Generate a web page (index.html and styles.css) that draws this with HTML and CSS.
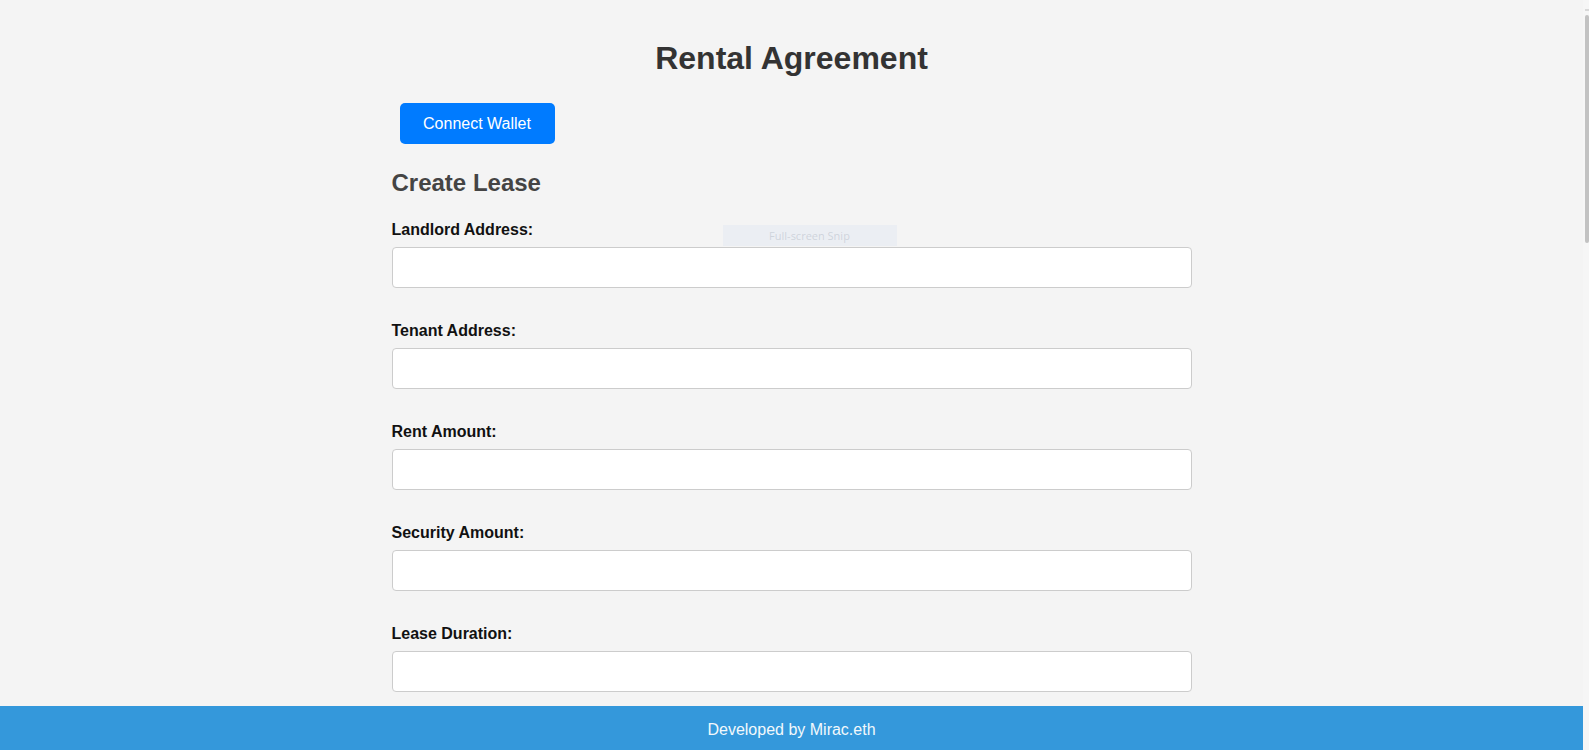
FILE: index.html
```html
<!DOCTYPE html>
<html lang="en">
<head>
<meta charset="utf-8">
<title>Rental Agreement</title>
<link rel="stylesheet" href="styles.css">
</head>
<body>
  <div class="page">
    <main class="content">
      <div class="container">
        <h1 class="title">Rental Agreement</h1>
        <div class="wallet-row">
          <button class="connect-btn" type="button">Connect Wallet</button>
        </div>
        <h2 class="section-title">Create Lease</h2>
        <form class="lease-form">
          <div class="field">
            <label class="field-label" for="landlord">Landlord Address:</label>
            <input class="field-input" id="landlord" type="text">
          </div>
          <div class="field">
            <label class="field-label" for="tenant">Tenant Address:</label>
            <input class="field-input" id="tenant" type="text">
          </div>
          <div class="field">
            <label class="field-label" for="rent">Rent Amount:</label>
            <input class="field-input" id="rent" type="text">
          </div>
          <div class="field">
            <label class="field-label" for="security">Security Amount:</label>
            <input class="field-input" id="security" type="text">
          </div>
          <div class="field">
            <label class="field-label" for="duration">Lease Duration:</label>
            <input class="field-input" id="duration" type="text">
          </div>
        </form>
        <div class="snip-ghost">Full-screen Snip</div>
      </div>
    </main>
    <footer class="footer">Developed by Mirac.eth</footer>
  </div>
  <div class="scrollbar">
    <div class="scroll-arrow"></div>
    <div class="scroll-thumb"></div>
  </div>
</body>
</html>
```

FILE: styles.css
```css
html, body {
  height: 100%;
  margin: 0;
  padding: 0;
  overflow: hidden;
}

body {
  display: flex;
  background: #f4f4f4;
  font-family: "Liberation Sans", Arial, sans-serif;
  color: #333;
}

.page {
  flex: 1;
  display: flex;
  flex-direction: column;
  min-width: 0;
}

.content {
  flex: 1;
  overflow: hidden;
}

.container {
  width: 800px;
  margin: 0 auto;
  padding-top: 40px;
  position: relative;
}

.title {
  margin: 0;
  font-size: 32px;
  line-height: 37px;
  font-weight: bold;
  text-align: center;
  color: #333;
}

.wallet-row {
  margin-top: 26px;
  padding-left: 8px;
}

.connect-btn {
  display: block;
  width: 155px;
  height: 41px;
  padding: 0;
  border: none;
  border-radius: 5px;
  background: #007bff;
  color: #fff;
  font-family: "Liberation Sans", Arial, sans-serif;
  font-size: 16px;
}

.section-title {
  margin: 25px 0 0;
  font-size: 24px;
  line-height: 28px;
  font-weight: bold;
  color: #444;
}

.lease-form {
  margin-top: 24px;
  display: flex;
  flex-direction: column;
  gap: 34px;
}

.field {
  display: flex;
  flex-direction: column;
}

.field-label {
  font-size: 16px;
  line-height: 18px;
  font-weight: bold;
  color: #111;
  margin-bottom: 8px;
}

.field-input {
  box-sizing: border-box;
  width: 800px;
  height: 41px;
  padding: 10px;
  border: 1px solid #ccc;
  border-radius: 4px;
  background: #fff;
  font-size: 16px;
  font-family: "Liberation Sans", Arial, sans-serif;
}

.snip-ghost {
  position: absolute;
  left: 331px;
  top: 225px;
  width: 174px;
  height: 21px;
  background: rgba(228, 234, 242, 0.55);
  color: rgba(150, 160, 175, 0.35);
  font-size: 11px;
  line-height: 21px;
  text-align: center;
  font-family: "Open Sans", "Liberation Sans", sans-serif;
}

.footer {
  box-sizing: border-box;
  height: 44px;
  flex-shrink: 0;
  padding-top: 4px;
  background: #3498db;
  color: #f2f8fc;
  font-size: 16px;
  line-height: 40px;
  text-align: center;
}

.scrollbar {
  width: 6px;
  flex-shrink: 0;
  background: #f6f6f6;
  display: flex;
  flex-direction: column;
  align-items: flex-end;
  padding-top: 9px;
  box-sizing: border-box;
}

.scroll-arrow {
  width: 4px;
  height: 2px;
  background: #d8d8d8;
  margin-bottom: 4px;
}

.scroll-thumb {
  width: 4px;
  height: 228px;
  background: #c2c2c2;
  border-radius: 2px;
}
```
